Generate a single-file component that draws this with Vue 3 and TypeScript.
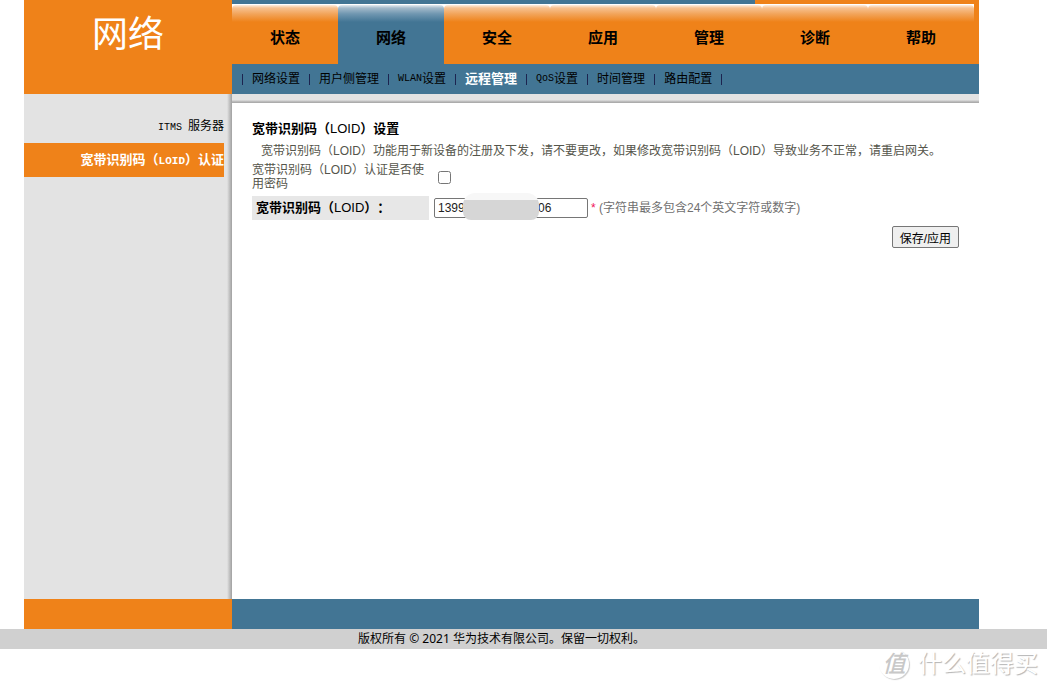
<script setup lang="ts">
import { ref } from 'vue'

interface SubItem {
  latin?: string
  label: string
}

const tabs: string[] = ['状态', '网络', '安全', '应用', '管理', '诊断', '帮助']
const activeTab = ref(1)

const subItems: SubItem[] = [
  { label: '网络设置' },
  { label: '用户侧管理' },
  { latin: 'WLAN', label: '设置' },
  { label: '远程管理' },
  { latin: 'QoS', label: '设置' },
  { label: '时间管理' },
  { label: '路由配置' },
]
const activeSub = ref(3)

const usePassword = ref(false)
const loid = ref('1399' + '\u00a0'.repeat(22) + '06')
</script>

<template>
  <div class="page">
    <div class="frame">
      <header class="header">
        <h1 class="section-name">网络</h1>
        <div class="navs">
          <div class="strip"></div>
          <nav class="tabs">
            <a
              v-for="(tab, i) in tabs"
              :key="tab"
              href="#"
              class="tab"
              :class="{ active: i === activeTab }"
              @click.prevent="activeTab = i"
            ><span class="face">{{ tab }}</span></a>
          </nav>
          <nav class="subnav">
            <a
              v-for="(item, i) in subItems"
              :key="item.label + i"
              href="#"
              class="sub"
              :class="{ active: i === activeSub }"
              @click.prevent="activeSub = i"
            ><span v-if="item.latin" class="mono">{{ item.latin }}</span>{{ item.label }}</a>
          </nav>
        </div>
      </header>

      <div class="body">
        <aside class="sidebar">
          <a href="#" class="side"><span class="mono">ITMS&nbsp;</span>服务器</a>
          <a href="#" class="side active">宽带识别码（<span class="mono">LOID</span>）认证</a>
        </aside>
        <main class="content">
          <h2 class="title">宽带识别码（<span class="regular">LOID</span>）设置</h2>
          <p class="intro">宽带识别码（LOID）功能用于新设备的注册及下发，请不要更改，如果修改宽带识别码（LOID）导致业务不正常，请重启网关。</p>
          <form @submit.prevent>
            <div class="row">
              <label class="name" for="use-password">宽带识别码（LOID）认证是否使用密码</label>
              <input id="use-password" v-model="usePassword" class="check" type="checkbox" />
            </div>
            <div class="row">
              <label class="name strong" for="loid">宽带识别码（<span class="regular">LOID</span>）：</label>
              <span class="field">
                <input id="loid" v-model="loid" class="text" type="text" />
                <span class="mask"></span>
              </span>
              <span class="hint"><span class="star">*</span> (字符串最多包含24个英文字符或数字)</span>
            </div>
            <div class="actions">
              <button class="save" type="submit">保存/应用</button>
            </div>
          </form>
        </main>
      </div>

      <div class="base"><div class="base-left"></div></div>
    </div>
    <footer class="copyright">版权所有 © 2021 华为技术有限公司。保留一切权利。</footer>
    <div class="watermark">
      <span class="badge">值</span>
      <span class="brand">什么值得买</span>
    </div>
  </div>
</template>

<style>
body {
  margin: 0;
  background: #fff;
}
</style>

<style scoped>
.page {
  position: relative;
  padding-bottom: 41px;
  font-family: "Liberation Sans", "Noto Sans CJK SC", sans-serif;
  font-size: 12px;
  color: #000;
  text-spacing-trim: space-all;
}
.page a {
  color: inherit;
  text-decoration: none;
}
.frame {
  margin: 0 68px 0 24px;
}
.mono {
  font-family: "Liberation Mono", monospace;
  font-size: 10px;
  line-height: 12px;
}
.regular {
  font-weight: 400;
}

.header {
  display: flex;
  background: #ef8219;
}
.section-name {
  flex: none;
  width: 208px;
  margin: 0;
  font-size: 36px;
  line-height: 70px;
  font-weight: 400;
  text-align: center;
  color: #fff;
}
.navs {
  flex: 1;
}
.strip {
  width: 70%;
  height: 4px;
  background: #427594;
}
.tabs {
  display: flex;
  padding-right: 5px;
}
.tab {
  flex: 1;
  padding-top: 1px;
  background: linear-gradient(#fff 5px, #ef8219 5px);
  font-size: 15px;
  line-height: 59px;
  font-weight: 700;
  text-align: center;
}
.face {
  display: block;
  padding-top: 6px;
  border-radius: 4px 4px 0 0;
  background: linear-gradient(#fdeee0, #f7c190 3px, #f2a45a 9px, #ef8219 17px);
  line-height: 53px;
}
.tab.active {
  background: linear-gradient(#fff 5px, #427594 5px);
}
.tab.active .face {
  background: linear-gradient(#e4ebf0, #a3bacb 3px, #6f96b0 9px, #427594 17px);
}
.subnav {
  display: flex;
  padding-left: 10px;
  background: #427594;
  line-height: 30px;
}
.sub {
  display: flex;
  align-items: center;
  white-space: nowrap;
}
.sub::after,
.sub:first-child::before {
  content: "";
  width: 1px;
  height: 11px;
  margin: 0 9px;
  background: #1c2450;
}
.sub:first-child::before {
  margin-left: 0;
}
.page .sub.active {
  color: #fff;
  font-size: 13px;
  font-weight: 700;
}

.body {
  display: flex;
  min-height: 505px;
}
.sidebar {
  flex: none;
  box-sizing: border-box;
  width: 208px;
  padding: 15px 8px 0 0;
  background: linear-gradient(to left, #a0a0a0, #e3e3e3 5px);
}
.side {
  display: block;
  line-height: 34px;
  text-align: right;
}
.page .side.active {
  background: #ef8219;
  color: #fff;
  font-size: 13px;
  font-weight: 700;
}
.side.active .mono {
  font-size: 11px;
}
.content {
  flex: 1;
  padding: 26px 20px 0;
  background: linear-gradient(#e3e3e3 6px, #c4c4c4 7px, #a4a4a4 9px, #fff 9px);
}
.title {
  margin: 0;
  font-size: 13px;
  line-height: 18px;
}
.intro {
  margin: 4px 0 3px;
  padding-left: 9px;
  line-height: 18px;
  color: #55554b;
}
.row {
  display: flex;
  align-items: center;
  min-height: 24px;
  margin-bottom: 5px;
  color: #55554b;
}
.name {
  flex: none;
  box-sizing: border-box;
  width: 177px;
  margin-right: 5px;
  line-height: 14px;
}
.name.strong {
  padding-left: 4px;
  background: #e7e7e7;
  font-size: 13px;
  line-height: 24px;
  font-weight: 700;
  color: #000;
}
.check {
  width: 13px;
  height: 13px;
  margin: 0 4px;
}
.field {
  position: relative;
  display: flex;
}
.text {
  box-sizing: border-box;
  width: 154px;
  height: 20px;
  padding: 1px 3px;
  border: 1px solid #767676;
  border-radius: 2px;
  font: inherit;
  color: #222;
}
.mask {
  position: absolute;
  left: 29px;
  top: -5px;
  width: 76px;
  height: 27px;
  border-radius: 12px 12px 8px 8px;
  background: linear-gradient(#f7f7f7 7px, #d6d6d6 7px);
}
.hint {
  margin-left: 3px;
  line-height: 16px;
  color: #707070;
}
.star {
  color: #f0145a;
}
.actions {
  display: flex;
  justify-content: flex-end;
  padding-top: 1px;
}
.save {
  height: 22px;
  padding: 0 7px;
  border: 1px solid #767676;
  border-radius: 2px;
  background: #efefef;
  font: inherit;
  color: #000;
}

.base {
  background: #427594;
}
.base-left {
  width: 208px;
  height: 30px;
  background: #ef8219;
}
.copyright {
  padding: 0 68px 0 24px;
  background: #d0d0d0;
  font-family: "Noto Sans", "Noto Sans CJK SC", sans-serif;
  line-height: 20px;
  text-align: center;
}
.watermark {
  position: absolute;
  right: 9px;
  bottom: 10px;
  display: flex;
  align-items: center;
  gap: 9px;
}
.badge {
  width: 30px;
  height: 30px;
  border-radius: 50%;
  background: #fff;
  box-shadow: 1px 1px 1px #ccc;
  font-size: 23px;
  font-style: italic;
  font-weight: 500;
  line-height: 30px;
  text-align: center;
  color: #c8c8c8;
}
.brand {
  font-size: 24px;
  line-height: 32px;
  color: #fff;
  text-shadow: 1px 1px 1px #b4b4b4;
}
</style>
